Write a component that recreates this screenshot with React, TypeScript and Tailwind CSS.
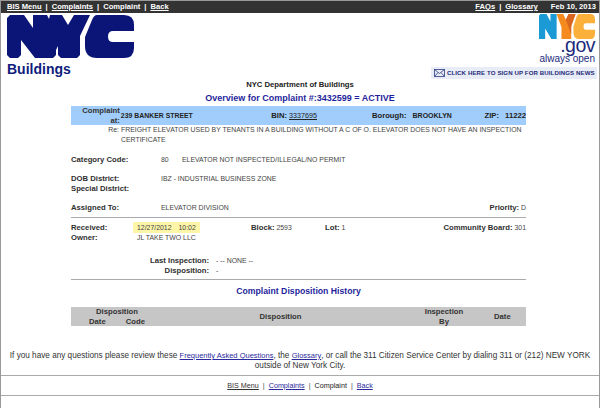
const NY_D = 'M10 15H24L33 28V15H47L49 19L50 15H62L68 25L74 15H90L80 36V55L77 58H61L58 55V46L56 50V55L53 58H35L21 40V55L18 58H10L7 55V18Z';
const C_D = 'M97 15H124Q134 15 134 25V31H113Q108 31 108 36.500Q108 42 113 42H134V48Q134 58 124 58H97Q85 58 85 46V37L92 20Q94 15 97 15Z';

const NycLogo = () => (
  <svg viewBox="7 15 127 43" className="block h-[43px] w-[127px]">
    <path d={NY_D} fill="#0b1477" />
    <path d={C_D} fill="#0b1477" />
  </svg>
);

const NycGovLogo = () => (
  <svg viewBox="7 15 127 43" className="block h-[25px] w-[56px]" preserveAspectRatio="none">
    <path d="M10 15H24L33 28V15H47V58H35L21 40V58H7V18Z" fill="#1b9ad6" />
    <path d="M47 15H62L68 25L74 15H90L80 36V58H58V38Z" fill="#f58a1f" />
    <path d="M74 15H90L80 36V50L68 25Z" fill="#d9661f" />
    <path d={C_D} fill="#fbb03b" />
  </svg>
);

const Label = ({ children, className = '' }: { children: React.ReactNode; className?: string }) => (
  <span className={`text-[7.700px] font-bold text-[#2f2f2f] ${className}`}>{children}</span>
);

export default function App() {
  return (
    <div className="h-[408px] w-[600px] overflow-hidden border-x border-t border-[#999] bg-white font-['Liberation_Sans',Arial,sans-serif] text-[6.900px] leading-[10px] text-[#444]">
      {/* top bar */}
      <div className="flex h-[12px] items-center justify-between bg-[#333] pl-[6px] pr-[3px] text-[7.600px] font-bold text-white">
        <div className="flex gap-[4px]">
          <span className="underline">BIS Menu</span>
          <span>|</span>
          <span className="underline">Complaints</span>
          <span>|</span>
          <span>Complaint</span>
          <span>|</span>
          <span className="underline">Back</span>
        </div>
        <div className="flex gap-[4px]">
          <span className="underline">FAQs</span>
          <span>|</span>
          <span className="underline">Glossary</span>
          <span className="ml-[9px]">Feb 10, 2013</span>
        </div>
      </div>

      {/* header */}
      <div className="flex h-[66px] justify-between pl-[6px] pr-[2px]">
        <div className="pt-[2px]">
          <NycLogo />
          <div className="mt-[3px] text-[14px] font-bold leading-[16px] text-[#0f1c7c]">Buildings</div>
        </div>
        <div className="flex flex-col items-end pt-[1px]">
          <div className="mr-[2px]">
            <NycGovLogo />
            <div className="-mt-[2px] text-right text-[19.500px] leading-[17px] tracking-[-0.5px] text-[#1b2a7a]">.gov</div>
            <div className="text-right text-[10px] leading-[10px] text-[#1b2a7a]">always open</div>
          </div>
          <div className="mt-[3px] flex h-[13px] w-[166px] items-center gap-[2px] bg-[#e8ecf6] pl-[3px] text-[6.100px] font-bold tracking-[0.1px] text-[#1f2a78]">
            <svg viewBox="0 0 11 8" className="h-[8px] w-[11px] shrink-0" fill="none" stroke="#2c3a86" strokeWidth="0.8">
              <rect x="0.500" y="0.500" width="10" height="7" />
              <path d="M0.500 0.500L5.500 4.500L10.500 0.500M0.500 7.500L4 3.500M10.500 7.500L7 3.500" />
            </svg>
            <span className="whitespace-nowrap">CLICK HERE TO SIGN UP FOR BUILDINGS NEWS</span>
          </div>
        </div>
      </div>

      {/* titles */}
      <div className="mt-[1px] text-center text-[7.700px] font-bold leading-[10px] text-[#222]">NYC Department of Buildings</div>
      <div className="mt-[3px] text-center text-[9px] font-bold leading-[11px] text-[#1f1f9c]">
        Overview for Complaint #:3432599 = ACTIVE
      </div>

      <div className="ml-[70px] mt-[2px] w-[455px]">
        {/* address band */}
        <div className="flex h-[19px] items-center bg-[#a0cdfb] text-[#222]">
          <div className="w-[49px] text-right text-[7.700px] font-bold leading-[9.500px] text-[#333]">Complaint at:</div>
          <div className="w-[152px] pl-px font-bold">239 BANKER STREET</div>
          <div className="w-[101px]">
            <span className="text-[7.700px] font-bold">BIN:</span> <span className="text-[7.200px] underline">3337695</span>
          </div>
          <div className="w-[113px] text-[7.700px] font-bold">
            Borough:<span className="ml-[6px] text-[7px]">BROOKLYN</span>
          </div>
          <div className="flex-1 text-right text-[7.700px] font-bold">
            ZIP:<span className="ml-[6px]">11222</span>
          </div>
        </div>

        <div className="flex leading-[9.500px]">
          <div className="w-[48px] text-right">Re:</div>
          <div className="flex-1 pl-[2px]">
            FREIGHT ELEVATOR USED BY TENANTS IN A BUILDING WITHOUT A C OF O. ELEVATOR DOES NOT HAVE AN INSPECTION CERTIFICATE
          </div>
        </div>

        <div className="mt-[11px] flex items-baseline">
          <Label className="w-[90px]">Category Code:</Label>
          <span className="w-[21px]">80</span>
          <span>ELEVATOR NOT INSPECTED/ILLEGAL/NO PERMIT</span>
        </div>

        <div className="mt-[9px] flex items-baseline">
          <Label className="w-[90px]">DOB District:</Label>
          <span>IBZ - INDUSTRIAL BUSINESS ZONE</span>
        </div>
        <Label className="block">Special District:</Label>

        <div className="mt-[9px] flex items-baseline">
          <Label className="w-[90px]">Assigned To:</Label>
          <span className="flex-1">ELEVATOR DIVISION</span>
          <span>
            <Label>Priority:</Label> D
          </span>
        </div>

        <div className="mt-[4px] h-[1px] bg-[#aaa]" />

        <div className="mt-[4px] flex items-center">
          <Label className="w-[62px]">Received:</Label>
          <span className="flex h-[11px] w-[67px] items-center gap-[7px] bg-[#fdf6a8] pl-[4px]">
            <span>12/27/2012</span>
            <span>10:02</span>
          </span>
          <span className="ml-[51px] w-[74px]">
            <Label>Block:</Label> 2593
          </span>
          <span className="flex-1">
            <Label>Lot:</Label> 1
          </span>
          <span>
            <Label>Community Board:</Label> 301
          </span>
        </div>
        <div className="flex items-baseline">
          <Label className="w-[66px]">Owner:</Label>
          <span>JL TAKE TWO LLC</span>
        </div>

        <div className="mt-[13px] flex items-baseline">
          <Label className="w-[138px] text-right">Last Inspection:</Label>
          <span className="ml-[7px]">- -- NONE --</span>
        </div>
        <div className="flex items-baseline">
          <Label className="w-[138px] text-right">Disposition:</Label>
          <span className="ml-[7px]">-</span>
        </div>

        <div className="mt-[3px] h-[1px] bg-[#aaa]" />

        <div className="mt-[6px] text-center text-[8.700px] font-bold leading-[10px] text-[#1f1f9c]">
          Complaint Disposition History
        </div>

        {/* history table head */}
        <div className="mt-[11px] flex h-[19px] items-center bg-[#c6c6c6] text-[7.700px] font-bold leading-[9.500px] text-[#333]">
          <div className="ml-[18px] w-[56px] text-center">
            Disposition
            <div className="flex justify-between">
              <span>Date</span>
              <span>Code</span>
            </div>
          </div>
          <div className="flex-1 pr-[8px] text-center">Disposition</div>
          <div className="mr-[30px] w-[40px] text-center">
            Inspection
            <div>By</div>
          </div>
          <div className="mr-[16px] w-[16px] text-center">Date</div>
        </div>
      </div>

      {/* help text */}
      <div className="mt-[25px] px-[4px] text-center text-[8.200px] leading-[10px] text-[#333]">
        If you have any questions please review these <span className="text-[7.500px] text-[#2a2a9c] underline">Frequently Asked Questions</span>, the <span className="text-[7.500px] text-[#2a2a9c] underline">Glossary</span>, or call the 311 Citizen Service Center by dialing 311 or (212) NEW YORK outside of New York City.
      </div>

      {/* footer */}
      <div className="mt-[4px] flex h-[21px] items-center justify-center gap-[4px] border-y border-[#aaa] text-[7.200px]">
        <span className="text-[#333] underline">BIS Menu</span>
        <span>|</span>
        <span className="text-[#2a2a9c] underline">Complaints</span>
        <span>|</span>
        <span className="text-[#222]">Complaint</span>
        <span>|</span>
        <span className="text-[#2a2a9c] underline">Back</span>
      </div>
    </div>
  );
}
